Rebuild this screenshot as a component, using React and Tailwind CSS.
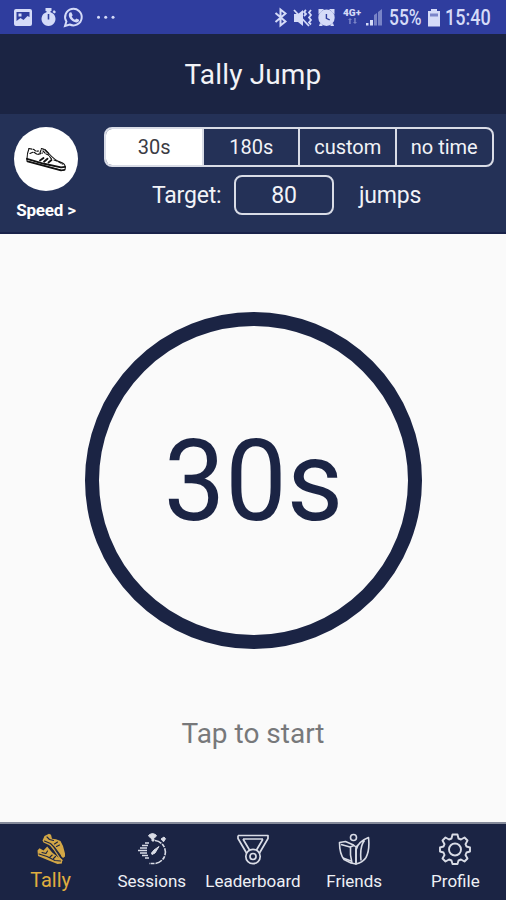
import React from 'react';

const DURATIONS = ['30s', '180s', 'custom', 'no time'];

function StatusBar() {
  return (
    <div className="flex h-[34px] items-center bg-[#2f3d9e] text-[#d5dbf8]">
      <svg width="130" height="34" viewBox="0 0 130 34" fill="currentColor">
        {/* picture */}
        <path fillRule="evenodd" d="M16 9h14a2 2 0 0 1 2 2v13a2 2 0 0 1-2 2H16a2 2 0 0 1-2-2V11a2 2 0 0 1 2-2zm.5 3v9l4-3 3 2 4-4 2 1v-5zm2 1.500h3v3h-3z" />
        {/* timer */}
        <path fillRule="evenodd" d="M45.500 8h6v3h-1v1.200a7 7 0 1 1-4 0V11h-1zM47.700 14v5.500h1.600V14z" />
        <path d="M52.500 12l1.500-2 2 2-1.500 1.500z" />
        {/* whatsapp */}
        <path fill="none" stroke="currentColor" strokeWidth="2" d="M65 26l1.400-4.500a8.300 8.300 0 1 1 3.300 3z" />
        <path d="M69.700 12.500l1.600-.2 1.400 3-1 1.300c.8 1.600 1.800 2.500 3.300 3.200l1.400-1.400 2.700 1.300c0 2-1.400 2.900-3 2.700-3.700-.5-7.300-4-7.300-7.300 0-1 .3-1.900.9-2.600z" />
        <circle cx="98.500" cy="17.200" r="1.500" />
        <circle cx="105.700" cy="17.200" r="1.500" />
        <circle cx="113" cy="17.200" r="1.500" />
      </svg>
      <svg className="ml-[140px]" width="115" height="34" viewBox="270 0 115 34" fill="currentColor">
        {/* bluetooth */}
        <path fill="none" stroke="currentColor" strokeWidth="2" d="M275.500 13l10 8.500-5 4V9.500l5 4-10 8.500" />
        {/* muted, vibrating */}
        <path d="M294 14h4l5-4v16l-5-4h-4z" />
        <path fill="none" stroke="currentColor" strokeWidth="1.800" d="M294 10l15 16M306 10l-2 2 2 2-2 2M311 10l-2 2.500 2 2.500-2 2.500 2 2.500-2 2.500 2 2" />
        {/* alarm */}
        <path fillRule="evenodd" d="M326.500 9.500a8.200 8.200 0 1 1 0 16.400 8.200 8.200 0 0 1 0-16.400zm-.8 4.500v4.800l3.700 1.700.6-1.300-2.900-1.300V14z" />
        <path d="M318.500 14.500v-5.500h5.500zM334.500 14.500v-5.500H329zM319 26l1-3 3 2-1 1zM334 26l-1-3-3 2 1 1z" />
        <text x="343" y="16" fontSize="8.500" fontWeight="900" className="font-[Roboto]" textLength="18" lengthAdjust="spacingAndGlyphs">4G+</text>
        <path opacity=".45" d="M348 20l2-2 2 2h-1.300v4h-1.500v-4zM353 22l2 2 2-2h-1.300v-4h-1.500v4z" />
        <path d="M366 23h2.500v2.500H366zM370 20h3v5.500h-3z" />
        <path opacity=".45" d="M374 15l3-2v12.500h-3zM378 12l4-3v16.500h-4z" />
      </svg>
      <div className="ml-[4px] w-[34px] pt-[2px] text-[22px] leading-none font-medium"><span className="inline-block origin-left scale-x-[.79]">55%</span></div>
      <svg className="ml-[4px] mt-px" width="14" height="18" viewBox="0 0 14 18" fill="currentColor">
        <path d="M4 0h6v2h3v15.500H1V2h3z" />
        <path fill="#7b85c9" d="M3 4.500h8v3H3z" />
      </svg>
      <div className="ml-[4px] w-[50px] pt-[2px] text-[22px] leading-none font-medium"><span className="inline-block origin-left scale-x-[.82]">15:40</span></div>
    </div>
  );
}

function Shoe() {
  return (
    <svg width="40" height="28" viewBox="0 0 40 28" fill="none" stroke="#111" strokeLinecap="round" strokeLinejoin="round">
      <path strokeWidth="1.100" d="M3 3.500C1.500 7 .8 11 1 16l34 9c3 .6 4.200 0 4.300-2 .2-3-1.500-5-5-6-5-1.500-8-4.500-11.500-8.500l-4-4" />
      <path strokeWidth="1.200" strokeDasharray="3 1.400" d="M3 3.500l5 1c1 1.500 2.500 2 4.500 1.500M14 8l1.500-4.500 3 1 4 4M4 8.500l3.500-1.500 4 2.500 5-1.500M17 6l3 3 2.500 1 3 4M28 15l4 1.500 4.500 2.500" />
      <path strokeWidth="1.900" d="M1 13.800l17 5 17 3.600 4-.5" />
      <path strokeWidth="1.600" d="M1.500 16.500l33.500 9 3.700-.8" />
      <path strokeWidth="1.800" d="M14 15.500l3.500-2.500M18 16.700l3.500-3M22.500 17.500l3-2.500" />
    </svg>
  );
}

function TallyIcon() {
  return (
    <svg width="30" height="32" viewBox="0 0 30 32" fill="#d2a646" strokeLinejoin="round" strokeLinecap="round">
      <path d="M6.500 7.500l2-4.500L13 .8l2 1 1 4 4 .5 4.500 1.700 2.500 5 2 7.500v3l-2 1.500-3-3-5-6.500L13 12 7.500 9.500z" />
      <path d="M1.500 17.500l2-2.200 4 2.200 3.700-4 5 6 5 4 5 3-.3 4-4.400.5-7.500-3L2 23z" />
      <path fill="none" stroke="#d2a646" strokeWidth="1.300" d="M14 11.500l4 5 6 9 2 2" />
      <path fill="none" stroke="#1b2444" strokeWidth="1.100" d="M8.500 8l6 2.500 4.500 4.500 5.500 7.500M11 4l2.500 2.500 4 1M18.500 11l3-2M20.500 13.500l3-1.500M3 21l8 2.500 8 4 5.500.5M6 19.500l4 1 1.500-2.500M14 24l2.200-2M17.500 25.500l2-2" />
    </svg>
  );
}

function SessionsIcon() {
  return (
    <svg width="32" height="32" viewBox="0 0 32 32" fill="none" stroke="#d9dce6">
      <path strokeWidth="1.600" d="M9 10h4M6 12.500h6M4 15h7M2 17.500h9M4 20h7M6 22.500h6M9 25h4" />
      <path strokeWidth="1.600" strokeDasharray="7 1 4 1" d="M19 7.500a11.500 11.500 0 0 1 8 4.500 11.500 11.500 0 0 1-10 18.500h-4" />
      <path fill="#d9dce6" d="M13.500 1.500l3-1 3 1 1 1.500-4 3.500-4-3.500zM16 6h2v2h-2zM25 6l3-2 1.500 1.800-2 3z" />
      <path fill="#d9dce6" d="M23 13.500l-4 6.500-3 1.500-.5-1.500 2.500-3z" />
    </svg>
  );
}

function LeaderboardIcon() {
  return (
    <svg width="32" height="32" viewBox="0 0 32 32" fill="none" stroke="#d9dce6" strokeWidth="1.700" strokeLinejoin="round">
      <path d="M1 2.500h30v3L22.500 20M1 2.500v3L9.500 20M6 6h20M6 6l6.500 11M26 6l-6.500 11" />
      <circle cx="16" cy="23.500" r="7.200" />
      <circle cx="16" cy="23.500" r="3" />
    </svg>
  );
}

function FriendsIcon() {
  return (
    <svg width="32" height="32" viewBox="0 0 32 32" fill="none" stroke="#d9dce6" strokeWidth="1.600" strokeLinejoin="round">
      <circle cx="15.500" cy="4.500" r="3" />
      <path d="M1.500 9.500l6-1 8 3.500 2.500 2V31l-5-1-7-3.500c-3-4-4.500-9-4.500-17z" />
      <path d="M3 11.500l9 2.500 4-1.500M12.500 14c-.5 6 0 11 1.500 16M5 25l8 3" />
      <path d="M18 31V17c1-5 6-10 12.500-12.500 1 9 .7 14-2.500 20-2.500 4-5.500 5.500-10 6.500zM26.500 7.500c-3.500 4-4.500 10-3.500 20M18 14l4-4" />
    </svg>
  );
}

function ProfileIcon() {
  return (
    <svg width="32" height="32" viewBox="0 0 32 32" fill="none" stroke="#d9dce6" strokeWidth="1.900" strokeLinejoin="round">
      <path d="M13.500 1.500h5l1 4 2.500 1 3.500-2 3 3-2 3.700 1 2.300 3.500 1v4l-3.500 1-1 2.500 2 3.500-3 3-3.500-2-2.500 1-1 3.500h-5l-1-3.500-2.500-1-3.500 2-3-3 2-3.500-1-2.500-3.500-1v-4l3.500-1 1-2.300-2-3.700 3-3 3.500 2 2.500-1z" />
      <circle cx="16" cy="16.500" r="6" />
    </svg>
  );
}

const TABS = [
  { label: 'Tally', Icon: TallyIcon },
  { label: 'Sessions', Icon: SessionsIcon },
  { label: 'Leaderboard', Icon: LeaderboardIcon },
  { label: 'Friends', Icon: FriendsIcon },
  { label: 'Profile', Icon: ProfileIcon },
];

export default function App() {
  return (
    <div className="flex h-[900px] w-[506px] flex-col overflow-hidden bg-[#fafafa] font-[Roboto,sans-serif]">
      <StatusBar />
      <header className="flex h-[80px] items-center justify-center bg-[#1b2443] pt-[2px] text-[28px] tracking-[.15px] text-[#f2f3f7]">
        Tally Jump
      </header>

      <section className="flex h-[120px] border-b-2 border-[#19224a] bg-[#243157] text-white">
        <div className="flex w-[92px] flex-col items-center pt-[13px]">
          <div className="flex size-[64px] items-center justify-center rounded-full bg-white">
            <Shoe />
          </div>
          <span className="mt-[7px] text-[17px] leading-[24px] font-bold tracking-[-.2px]">Speed &gt;</span>
        </div>
        <div className="ml-[12px] w-[390px] pt-[13px]">
          <div className="grid h-[40px] grid-cols-4 overflow-hidden rounded-[8px] border-2 border-[#d9dce6] text-[20px]">
            {DURATIONS.map((d, i) => (
              <button
                key={d}
                className={
                  i === 0
                    ? 'bg-white text-[#3b3b44]'
                    : '-ml-px border-l-2 border-[#d9dce6] text-[#f2f3f7]'
                }
              >
                {d}
              </button>
            ))}
          </div>
          <div className="mt-[8px] flex h-[40px] items-center pl-[48px] text-[23px] tracking-[-.2px] text-[#f2f3f7]">
            <span className="w-[82px] pt-[2px]">Target:</span>
            <span className="flex h-[40px] w-[100px] items-center justify-center rounded-[8px] border-2 border-[#d9dce6] pt-[2px]">80</span>
            <span className="ml-[25px] pt-[2px]">jumps</span>
          </div>
        </div>
      </section>

      <main className="flex flex-1 flex-col items-center pt-[78px]">
        <button className="flex size-[337px] items-center justify-center rounded-full border-[14px] border-[#1b2444] text-[114px] leading-none text-[#1b2444]">
          <span className="inline-block scale-x-[.96]">30s</span>
        </button>
        <p className="mt-[65px] text-[28px] leading-[40px] text-[#77787a]">Tap to start</p>
      </main>

      <nav className="grid h-[78px] grid-cols-5 border-t-2 border-[#858a9a] bg-[#1b2444]">
        {TABS.map(({ label, Icon }, i) => (
          <button key={label} className="flex flex-col items-center pt-[9px]">
            <span className="flex h-[32px] items-center"><Icon /></span>
            <span className={i === 0 ? 'mt-[3px] text-[20px] leading-[24px] text-[#e0ae3f]' : 'mt-[5px] text-[17px] leading-[22px] text-[#eef0f5]'}>
              {label}
            </span>
          </button>
        ))}
      </nav>
    </div>
  );
}
